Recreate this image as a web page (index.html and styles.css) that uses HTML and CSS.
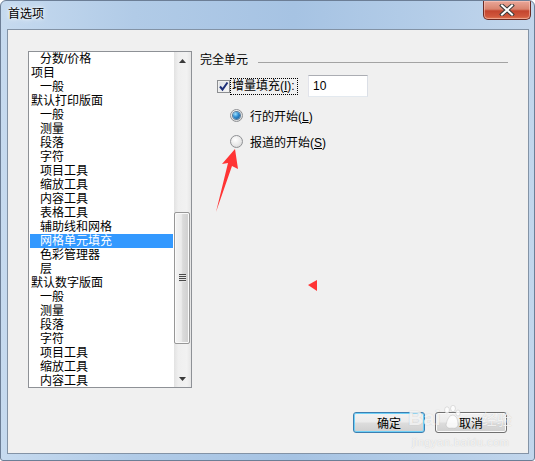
FILE: index.html
```html
<!DOCTYPE html>
<html lang="zh-CN">
<head>
    <meta charset="UTF-8">
    <title>首选项</title>
    <link rel="stylesheet" href="styles.css">
</head>
<body>
<div class="screen">
    <div class="window">
        <div class="titlebar">
            <span class="title">首选项</span>
            <div class="close">
                <svg width="16" height="12" viewBox="0 0 16 12">
                    <path d="M3 1.5 L13 10.5 M13 1.5 L3 10.5" stroke="#3b3b3b" stroke-width="4" stroke-linecap="square"/>
                    <path d="M3 1.5 L13 10.5 M13 1.5 L3 10.5" stroke="#fff" stroke-width="2" stroke-linecap="square"/>
                </svg>
            </div>
        </div>

        <div class="client">
            <div class="main">
                <div class="listbox">
                    <ul class="items">
                        <li class="child">分数/价格</li>
                        <li>项目</li>
                        <li class="child">一般</li>
                        <li>默认打印版面</li>
                        <li class="child">一般</li>
                        <li class="child">测量</li>
                        <li class="child">段落</li>
                        <li class="child">字符</li>
                        <li class="child">项目工具</li>
                        <li class="child">缩放工具</li>
                        <li class="child">内容工具</li>
                        <li class="child">表格工具</li>
                        <li class="child">辅助线和网格</li>
                        <li class="child selected">网格单元填充</li>
                        <li class="child">色彩管理器</li>
                        <li class="child">层</li>
                        <li>默认数字版面</li>
                        <li class="child">一般</li>
                        <li class="child">测量</li>
                        <li class="child">段落</li>
                        <li class="child">字符</li>
                        <li class="child">项目工具</li>
                        <li class="child">缩放工具</li>
                        <li class="child">内容工具</li>
                    </ul>
                    <div class="vscroll">
                        <div class="arrow">
                            <svg width="7" height="4" viewBox="0 0 7 4"><path d="M3.5 0 L7 4 L0 4 Z" fill="#3a3a3a"/></svg>
                        </div>
                        <div class="track">
                            <div class="thumb"><span class="grip"></span></div>
                        </div>
                        <div class="arrow">
                            <svg width="7" height="4" viewBox="0 0 7 4"><path d="M0 0 L7 0 L3.5 4 Z" fill="#3a3a3a"/></svg>
                        </div>
                    </div>
                </div>

                <div class="panel">
                    <div class="group-head">
                        <span>完全单元</span>
                        <span class="rule"></span>
                    </div>
                    <div class="check-row">
                        <span class="checkbox">
                            <svg width="11" height="11" viewBox="0 0 11 11"><path d="M2 5.5 L4.5 8.5 L9.5 1.5" fill="none" stroke="#1d2f78" stroke-width="2"/></svg>
                        </span>
                        <span class="focus-label">增量填充(<u>I</u>):</span>
                        <span class="textbox">10</span>
                    </div>
                    <div class="radio-row">
                        <span class="radio on"></span>
                        <span>行的开始(<u>L</u>)</span>
                    </div>
                    <div class="radio-row">
                        <span class="radio"></span>
                        <span>报道的开始(<u>S</u>)</span>
                    </div>
                </div>
            </div>

            <div class="buttons">
                <button class="btn default">确定</button>
                <button class="btn">取消</button>
            </div>
        </div>
    </div>

    <div class="watermark">
        <div class="wm-logo">
            <span>Bai</span>
            <svg width="18" height="26" viewBox="0 0 18 26">
                <g fill="rgba(255,255,255,0.8)" stroke="rgba(150,150,150,0.35)" stroke-width="0.8">
                    <ellipse cx="4" cy="5" rx="2.4" ry="3.2"/>
                    <ellipse cx="10" cy="3.5" rx="2.4" ry="3.2"/>
                    <ellipse cx="15" cy="8" rx="2.2" ry="3"/>
                    <path d="M3 20 Q5 10 10 10 Q15 11 15 20 Q14 24 9 23 Q4 24 3 20 Z"/>
                </g>
            </svg>
            <span class="wm-cn">经验</span>
        </div>
        <div class="wm-url">jingyan.baidu.com</div>
    </div>

    <svg class="marks" width="535" height="461" viewBox="0 0 535 461">
        <polygon points="235,149 222,164 228,163 216,212 232,166 238,169" fill="#ff3434"/>
        <polygon points="308,285 317,280 317,291" fill="#ff3434"/>
    </svg>
</div>
</body>
</html>
```

FILE: styles.css
```css
* { box-sizing: border-box; }

body {
    margin: 0;
    font-family: "Liberation Sans", "Noto Sans CJK SC", sans-serif;
    font-size: 12px;
    color: #000;
    background: #fff;
}

.screen {
    position: relative;
    width: 535px;
    height: 461px;
}

.window {
    width: 535px;
    height: 461px;
    border: 1px solid #6c7e96;
    border-radius: 6px 6px 3px 3px;
    background: linear-gradient(to right, #c6daef 0%, #b1cbe7 25%, #a6c3e3 55%, #b4cde8 80%, #c2d6ec 100%);
    display: flex;
    flex-direction: column;
    overflow: hidden;
}

.titlebar {
    height: 28px;
    display: flex;
    align-items: flex-start;
}
.title {
    padding-left: 7px;
    line-height: 26px;
    text-shadow: 0 0 6px #fff, 0 0 3px #fff;
}
.close {
    margin-left: auto;
    margin-right: 3px;
    width: 48px;
    height: 19px;
    border: 1px solid #6b2b24;
    border-top: none;
    border-radius: 0 0 5px 5px;
    background: linear-gradient(#e9a799 0%, #d9846f 45%, #c4452e 55%, #d0573c 85%, #e07a55 100%);
    box-shadow: inset 0 0 0 1px rgba(255, 210, 200, 0.5);
    display: flex;
    align-items: center;
    justify-content: center;
}

.client {
    margin: 0 5px 6px 6px;
    height: 425px;
    border: 1px solid #8393a6;
    background: #f0f0f0;
    display: flex;
    flex-direction: column;
}

.main {
    display: flex;
    padding: 21px 0 0 20px;
}

/* list box */
.listbox {
    width: 164px;
    height: 337px;
    border: 1px solid #8e9196;
    background: #fff;
    display: flex;
}
.items {
    flex: 1;
    list-style: none;
    margin: 0;
    padding: 0;
    overflow: hidden;
}
.items li {
    height: 14px;
    line-height: 13px;
    padding-top: 1px;
    margin: 0 1px;
    padding-left: 1px;
    white-space: nowrap;
}
.items li.child { padding-left: 10px; }
.items li.selected {
    background: #3399ff;
    color: #fff;
}

.vscroll {
    width: 17px;
    display: flex;
    flex-direction: column;
    background: linear-gradient(to right, #e2e2e2, #efefef 25%, #f2f2f2 75%, #e6e6e6);
}
.arrow {
    height: 17px;
    display: flex;
    align-items: center;
    justify-content: center;
}
.track { flex: 1; }
.thumb {
    margin: 143px 1px 0 0;
    height: 132px;
    border: 1px solid #979797;
    border-radius: 2px;
    background: linear-gradient(to right, #f4f4f4, #ebebeb 45%, #dbdbdb 55%, #cfcfcf);
    box-shadow: inset 0 0 0 1px #fafafa;
    display: flex;
    align-items: center;
    justify-content: center;
}
.grip {
    width: 7px;
    height: 8px;
    background: repeating-linear-gradient(to bottom, #4a4a4a 0 1px, #e6e6e6 1px 2px);
}

/* right panel */
.panel {
    margin-left: 8px;
    width: 308px;
    padding-top: 2px;
}
.group-head {
    display: flex;
    height: 14px;
    line-height: 14px;
}
.rule {
    flex: 1;
    height: 1px;
    margin: 9px 0 0 10px;
    background: #a3a3a3;
}

.check-row {
    margin-top: 8px;
    padding-left: 17px;
    height: 22px;
    display: flex;
    align-items: center;
}
.checkbox {
    width: 13px;
    height: 13px;
    border: 1px solid #8c8e91;
    background: linear-gradient(135deg, #d9dde2, #f7f8f9);
    box-shadow: inset 0 0 0 1px #f0f0f0;
    display: flex;
    align-items: center;
    justify-content: center;
}
.focus-label {
    width: 68px;
    height: 17px;
    line-height: 15px;
    padding-left: 1px;
    border: 1px dotted #000;
}
.textbox {
    margin-left: 10px;
    width: 60px;
    height: 22px;
    border: 1px solid;
    border-color: #abadb3 #dbdfe6 #e3e9ef #e2e3ea;
    background: #fff;
    padding-left: 4px;
    line-height: 20px;
}

.radio-row {
    margin-top: 10px;
    padding-left: 30px;
    height: 16px;
    display: flex;
    align-items: center;
    gap: 7px;
}
.radio {
    width: 13px;
    height: 13px;
    border-radius: 50%;
    border: 1px solid #8f9194;
    background: radial-gradient(circle at 40% 35%, #ffffff 0%, #e8e8e8 55%, #cdcdcd 100%);
    display: flex;
    align-items: center;
    justify-content: center;
}
.radio.on::after {
    content: "";
    width: 7px;
    height: 7px;
    border-radius: 50%;
    background: radial-gradient(circle at 35% 30%, #9ee2ff 0%, #2e8bd0 45%, #0f4f86 100%);
    box-shadow: 0 0 0 1px #5b7e9c;
}

/* dialog buttons */
.buttons {
    margin-top: 24px;
    padding-right: 21px;
    display: flex;
    justify-content: flex-end;
    gap: 10px;
}
.btn {
    width: 72px;
    height: 21px;
    padding: 0;
    font-family: inherit;
    font-size: 12px;
    color: #000;
    border: 1px solid #707070;
    border-radius: 3px;
    background: linear-gradient(#f2f2f2 0%, #ebebeb 48%, #dddddd 52%, #cfcfcf 100%);
    box-shadow: inset 0 0 0 1px #fbfbfb;
}
.btn.default {
    border-color: #3c7fb1;
    box-shadow: inset 0 0 0 1px #6fd0f7;
}

/* overlays */
.watermark {
    position: absolute;
    left: 408px;
    top: 403px;
    color: rgba(255, 255, 255, 0.8);
    text-shadow: 0 0 1px rgba(120, 120, 120, 0.4);
    pointer-events: none;
}
.wm-logo {
    display: flex;
    align-items: center;
    height: 30px;
    font-family: "Liberation Sans", sans-serif;
    font-weight: bold;
    font-size: 21px;
}
.wm-logo svg { margin: 0 1px 0 2px; }
.wm-cn {
    margin-left: 20px;
    font-family: "Noto Sans CJK SC", sans-serif;
    font-weight: normal;
    font-size: 15px;
}
.wm-url {
    margin: 3px 0 0 4px;
    font-size: 11px;
    letter-spacing: 0.5px;
}

.marks {
    position: absolute;
    left: 0;
    top: 0;
    pointer-events: none;
}
```
